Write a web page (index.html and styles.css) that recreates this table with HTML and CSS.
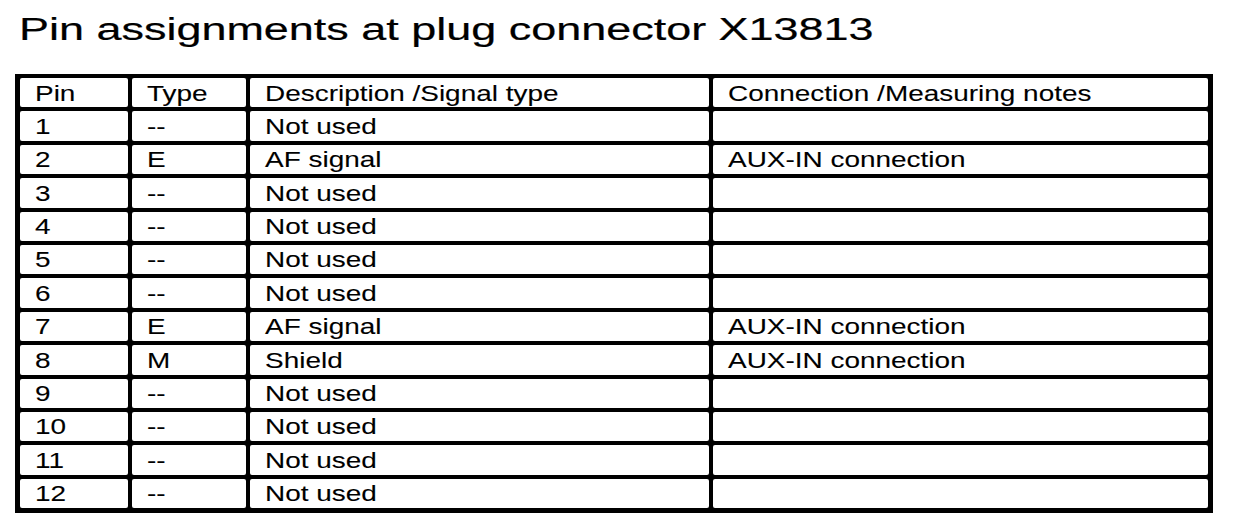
FILE: index.html
```html
<!DOCTYPE html>
<html lang="en">
<head>
<meta charset="utf-8">
<title>Pin assignments at plug connector X13813</title>
<link rel="stylesheet" href="styles.css">
</head>
<body>
<h1 class="title"><span class="stretch">Pin assignments at plug connector X13813</span></h1>
<div class="pin-table">
  <div class="cell head"><span class="txt">Pin</span></div>
  <div class="cell head"><span class="txt">Type</span></div>
  <div class="cell head"><span class="txt">Description /Signal type</span></div>
  <div class="cell head"><span class="txt">Connection /Measuring notes</span></div>

  <div class="cell"><span class="txt">1</span></div>
  <div class="cell"><span class="txt">--</span></div>
  <div class="cell"><span class="txt">Not used</span></div>
  <div class="cell"></div>

  <div class="cell"><span class="txt">2</span></div>
  <div class="cell"><span class="txt">E</span></div>
  <div class="cell"><span class="txt">AF signal</span></div>
  <div class="cell"><span class="txt">AUX-IN connection</span></div>

  <div class="cell"><span class="txt">3</span></div>
  <div class="cell"><span class="txt">--</span></div>
  <div class="cell"><span class="txt">Not used</span></div>
  <div class="cell"></div>

  <div class="cell"><span class="txt">4</span></div>
  <div class="cell"><span class="txt">--</span></div>
  <div class="cell"><span class="txt">Not used</span></div>
  <div class="cell"></div>

  <div class="cell"><span class="txt">5</span></div>
  <div class="cell"><span class="txt">--</span></div>
  <div class="cell"><span class="txt">Not used</span></div>
  <div class="cell"></div>

  <div class="cell"><span class="txt">6</span></div>
  <div class="cell"><span class="txt">--</span></div>
  <div class="cell"><span class="txt">Not used</span></div>
  <div class="cell"></div>

  <div class="cell"><span class="txt">7</span></div>
  <div class="cell"><span class="txt">E</span></div>
  <div class="cell"><span class="txt">AF signal</span></div>
  <div class="cell"><span class="txt">AUX-IN connection</span></div>

  <div class="cell"><span class="txt">8</span></div>
  <div class="cell"><span class="txt">M</span></div>
  <div class="cell"><span class="txt">Shield</span></div>
  <div class="cell"><span class="txt">AUX-IN connection</span></div>

  <div class="cell"><span class="txt">9</span></div>
  <div class="cell"><span class="txt">--</span></div>
  <div class="cell"><span class="txt">Not used</span></div>
  <div class="cell"></div>

  <div class="cell"><span class="txt">10</span></div>
  <div class="cell"><span class="txt">--</span></div>
  <div class="cell"><span class="txt">Not used</span></div>
  <div class="cell"></div>

  <div class="cell"><span class="txt">11</span></div>
  <div class="cell"><span class="txt">--</span></div>
  <div class="cell"><span class="txt">Not used</span></div>
  <div class="cell"></div>

  <div class="cell"><span class="txt">12</span></div>
  <div class="cell"><span class="txt">--</span></div>
  <div class="cell"><span class="txt">Not used</span></div>
  <div class="cell"></div>
</div>
</body>
</html>
```

FILE: styles.css
```css
html, body {
  margin: 0;
  padding: 0;
  background: #fff;
}

body {
  font-family: "Liberation Sans", Arial, sans-serif;
  color: #000;
}

.title {
  margin: 13px 0 0 19px;
  font-size: 31px;
  font-weight: normal;
  line-height: 34px;
  height: 34px;
  white-space: nowrap;
  -webkit-text-stroke: 0.2px #000;
}

.stretch {
  display: inline-block;
  transform: scaleX(1.45);
  transform-origin: 0 50%;
}

.pin-table {
  margin: 27px 0 0 15px;
  width: 1198px;
  box-sizing: border-box;
  display: grid;
  grid-template-columns: 108px 114px 459px 495px;
  grid-auto-rows: 29.4px;
  gap: 4px;
  padding: 4px 5px 5px 5px;
  background: #000;
}

.cell {
  background: #fff;
  border-radius: 2px;
  padding: 0.5px 0 0 15px;
  font-size: 22px;
  line-height: 29px;
  white-space: nowrap;
  overflow: hidden;
  -webkit-text-stroke: 0.1px #000;
}

.txt {
  display: inline-block;
  transform: scaleX(1.27);
  transform-origin: 0 50%;
}
```
